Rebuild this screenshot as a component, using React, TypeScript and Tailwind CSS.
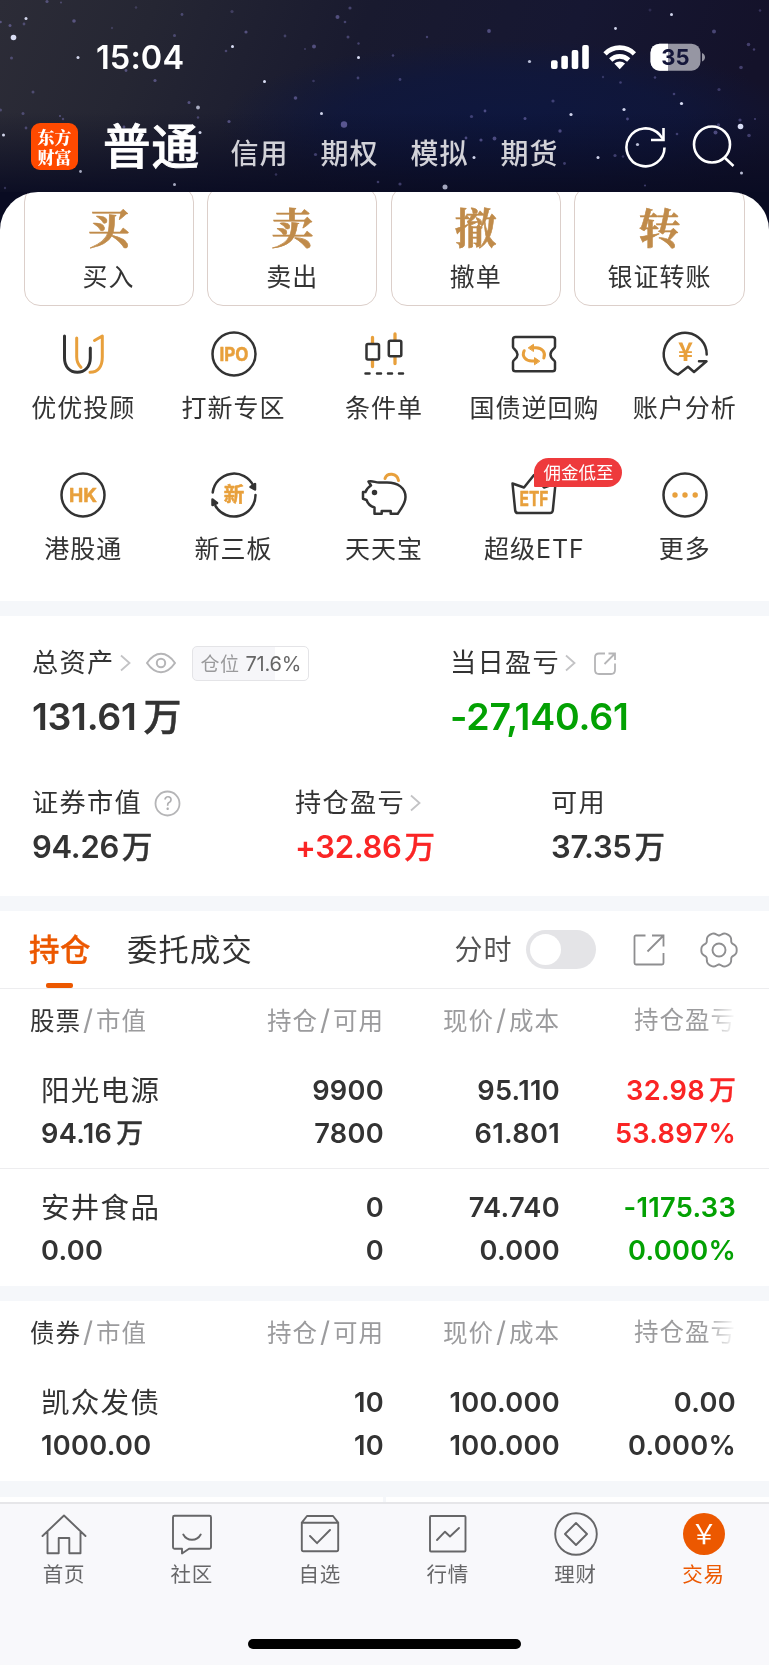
import type { ReactNode } from 'react'

const DARK = '#333333'
const GOLD = '#e8a03c'
const GRAY = '#666668'

// x, y, radius, opacity
const stars: [number, number, number, number][] = [
  [13.5, 37.5, 2.8, 0.95], [26, 18.5, 1.5, 0.9], [10, 25.5, 1.5, 0.5], [24, 24, 1.4, 0.4], [47, 1.5, 1.6, 0.45],
  [0.5, 22, 1.3, 0.5], [74, 21, 1.8, 0.5], [11.5, 58, 1.5, 0.4], [78, 57.5, 1.5, 0.9], [33, 92, 1.5, 0.4],
  [61, 2.5, 1, 0.4], [112, 28, 1.2, 0.25], [136, 7.5, 1.3, 0.25], [182, 14.5, 1.4, 0.4], [174.5, 35.5, 1.5, 0.4],
  [232.5, 46.5, 1.5, 0.95], [226, 51, 1.3, 0.4], [155, 80.5, 1.6, 0.5], [126, 70.5, 1.4, 0.5], [189, 102.5, 1.5, 0.5],
  [198, 107.5, 1.9, 0.7], [264.5, 81.5, 1.5, 0.95], [246, 32, 1.6, 0.5], [285, 36, 1.4, 0.35], [232, 11.5, 1.6, 0.3],
  [314, 46.5, 2, 0.5], [305, 49, 1.1, 0.3], [295.5, 98, 1.8, 0.5], [321.5, 113.5, 1.5, 0.9], [344, 124.5, 3.2, 0.6],
  [337.5, 17, 2, 0.5], [345, 22, 1.3, 0.4], [350, 8, 1.6, 0.4], [348, 37, 1.5, 0.4], [358.5, 57.5, 1.5, 0.95],
  [358.5, 43.5, 1.2, 0.4], [358, 78, 1.4, 0.4], [313.5, 81, 1.3, 0.3], [229, 121.5, 1.6, 0.5], [200, 132.5, 1.5, 0.9],
  [198, 117.5, 1.2, 0.4], [197, 153, 1.3, 0.7], [174.5, 184.5, 1.5, 0.7], [80.5, 171.5, 1.4, 0.7], [3.5, 135, 1.5, 0.9],
  [23, 113.5, 1.5, 0.4], [26, 128, 1.4, 0.4], [60, 116, 1, 0.5], [63, 119, 1.2, 0.4], [0.5, 110, 1.5, 0.4],
  [5, 188, 1.2, 0.3], [315.5, 154.5, 1.6, 0.4], [276, 174.5, 1.3, 0.3], [378, 182, 1.3, 0.4], [124, 127, 1.4, 0.5],
  [427, 37, 1.2, 0.4], [489, 31, 1.9, 0.5], [393, 55.5, 1.3, 0.4], [400, 79.5, 1.4, 0.4], [529.5, 61.5, 1.6, 0.8],
  [615.5, 28.5, 1.4, 0.9], [671.5, 14.5, 1.5, 0.9], [650, 10, 1.5, 0.2], [714, 31.5, 2, 0.45], [760, 10.5, 1.3, 0.3],
  [748.5, 44.5, 1.8, 0.4], [754, 49.5, 1.2, 0.4], [741, 67.5, 1.8, 0.4], [719, 89.5, 1.6, 0.35], [681.5, 103.5, 1.6, 0.95],
  [674, 94, 1.3, 0.4], [655, 77.5, 1.3, 0.4], [620.5, 82.5, 1.3, 0.4], [603, 77, 1.2, 0.3], [553, 101, 1.6, 0.4],
  [571, 114.5, 1.6, 0.9], [624, 109.5, 1.6, 0.9], [627.5, 119, 1.4, 0.5], [525, 118.5, 1.5, 0.5], [560, 131, 1.7, 0.5],
  [485, 111, 1.4, 0.5], [471.5, 116.5, 1.6, 0.4], [494.5, 138.5, 1.9, 0.5], [481, 140, 1.6, 0.5], [466, 138, 1.4, 0.5],
  [474, 157.5, 1.5, 0.9], [598, 157.5, 1.5, 0.9], [518.5, 147.5, 2, 0.6], [564.5, 163.5, 1.4, 0.4], [637.5, 144.5, 1.6, 0.8],
  [740.5, 126.5, 2.8, 0.95], [740, 120, 1.6, 0.4], [718.5, 125, 1.7, 0.4], [715.5, 132.5, 2, 0.5], [749, 135.5, 1.8, 0.4],
  [677, 134, 1.3, 0.4], [741.5, 173, 1.5, 0.8], [445, 187, 2.5, 0.7], [400, 184, 1.6, 0.4], [645, 185.5, 1.1, 0.4],
  [615, 155.5, 1.6, 0.4], [623, 156.5, 1.3, 0.3], [755, 119, 1.1, 0.4],
]

function StarrySky() {
  return (
    <svg className="absolute left-0 top-0" width="769" height="240" viewBox="0 0 769 240">
      <defs>
        <linearGradient id="sky" x1="0" y1="0" x2="1" y2="0.12">
          <stop offset="0" stopColor="#2c2c37" />
          <stop offset="0.2" stopColor="#252633" />
          <stop offset="0.48" stopColor="#191a2f" />
          <stop offset="0.75" stopColor="#161732" />
          <stop offset="1" stopColor="#14122a" />
        </linearGradient>
        <radialGradient id="blue">
          <stop offset="0" stopColor="#0d1740" stopOpacity="0.9" />
          <stop offset="0.6" stopColor="#0d1740" stopOpacity="0.65" />
          <stop offset="1" stopColor="#0d1740" stopOpacity="0" />
        </radialGradient>
        <linearGradient id="floor" x1="0" y1="0" x2="0" y2="1">
          <stop offset="0" stopColor="#090b22" stopOpacity="0" />
          <stop offset="1" stopColor="#090b22" stopOpacity="0.9" />
        </linearGradient>
        <filter id="soft" x="-100%" y="-100%" width="300%" height="300%">
          <feGaussianBlur stdDeviation="0.5" />
        </filter>
      </defs>
      <rect width="769" height="240" fill="url(#sky)" />
      <ellipse cx="510" cy="125" rx="290" ry="85" fill="url(#blue)" />
      <rect y="112" width="769" height="80" fill="url(#floor)" />
      <rect y="192" width="769" height="48" fill="#090b22" />
      <g filter="url(#soft)">
        {stars.map(([x, y, r, o], i) => (
          <circle key={i} cx={x} cy={y} r={r} opacity={o} fill={o > 0.65 ? '#e4e8ff' : '#8a82cc'} />
        ))}
      </g>
    </svg>
  )
}

function StatusBar() {
  return (
    <div className="flex h-[115px] items-start pl-24 pr-[63px] pt-[38px]">
      <span className="text-[32.5px] leading-[40px] font-semibold text-white tracking-[0.1px]">15:04</span>
      <svg className="ml-auto mt-[5px]" width="155" height="30" viewBox="0 0 155 30">
        <g fill="#fff">
          <rect x="0" y="17.3" width="6.6" height="8.7" rx="2" />
          <rect x="10.3" y="12.7" width="6.6" height="13.3" rx="2" />
          <rect x="20.7" y="7" width="6.6" height="19" rx="2" />
          <rect x="31.2" y="2" width="6.6" height="24" rx="2" />
        </g>
        <g fill="none" stroke="#fff" strokeWidth="4.6">
          <path d="M54 10.8 A20.5 20.5 0 0 1 83.4 10.8" />
          <path d="M59.7 17 A13 13 0 0 1 77.7 17" />
        </g>
        <path d="M63.3 20.6 A8.3 8.3 0 0 1 74.1 20.6 L68.7 26.2 Z" fill="#fff" />
        <clipPath id="battery">
          <rect x="99.5" y="0.7" width="50" height="27" rx="9" />
        </clipPath>
        <g clipPath="url(#battery)">
          <rect x="99" width="51" height="30" fill="#9696a3" />
          <rect x="99" width="18" height="30" fill="#fff" />
        </g>
        <path d="M151 10 q3 1.4 3 4.3 q0 2.9 -3 4.3 Z" fill="#9696a3" />
        <text x="124.5" y="22.4" textAnchor="middle" fontSize="22" fontWeight="700" fill="#14163a">35</text>
      </svg>
    </div>
  )
}

const accounts = ['信用', '期权', '模拟', '期货']

function TopTabs() {
  return (
    <div className="flex h-[77px] items-start pl-[31px]">
      <div className="mt-2 flex h-[47px] w-[47px] flex-col items-center justify-center gap-[2px] rounded-[9px] bg-[#ff4a00] font-['Noto_Serif_CJK_SC','Noto_Sans_CJK_SC',serif] text-[17px] leading-[18px] font-black text-white">
        <span>东方</span>
        <span>财富</span>
      </div>
      <span className="ml-[25px] mt-[2px] text-[47.5px] leading-[60px] font-medium tracking-[1px] text-white [-webkit-text-stroke:0.8px_white]">普通</span>
      <div className="ml-[30.5px] mt-[19px] flex gap-[31px] text-[28px] leading-[40px] font-medium tracking-[0.9px] text-[#d2d2d8]">
        {accounts.map((name) => (
          <span key={name} className="w-[59px] whitespace-nowrap">{name}</span>
        ))}
      </div>
      <svg className="ml-auto mr-[30px] mt-[8px]" width="116" height="48" viewBox="0 0 116 48" fill="none" stroke="#fff" strokeWidth="2.6">
        <path d="M41.5 24.5 A19 19 0 1 1 36.5 11.5 L40 16" />
        <path d="M40.5 5 V17 H28" />
        <circle cx="89" cy="21.5" r="18" />
        <path d="M101.5 34.5 L110.5 43" />
      </svg>
    </div>
  )
}

const actions = [
  { glyph: '买', label: '买入' },
  { glyph: '卖', label: '卖出' },
  { glyph: '撤', label: '撤单' },
  { glyph: '转', label: '银证转账' },
]

function ActionCards() {
  return (
    <div className="h-[115px] overflow-hidden rounded-t-[38px] pl-[23.5px] pr-[24.5px]">
      <div className="-mt-[6px] grid grid-cols-4 gap-[13.5px]">
        {actions.map((a) => (
          <div key={a.label} className="flex h-[120px] flex-col items-center rounded-[16px] border border-[#dccfca] pt-[16px]">
            <span className="font-['Noto_Serif_CJK_SC','Noto_Serif_SC','Noto_Sans_CJK_SC',serif] text-[42px] leading-[46px] font-bold text-[#c08b4a] [-webkit-text-stroke:0.6px_#c08b4a]">{a.glyph}</span>
            <span className="mt-[10px] text-[25px] leading-[36px] tracking-[1px]">{a.label}</span>
          </div>
        ))}
      </div>
    </div>
  )
}

function Icon({ children }: { children: ReactNode }) {
  return (
    <svg width="50" height="50" viewBox="-25 -25 50 50" fill="none" stroke={DARK} strokeWidth="2.5" strokeLinejoin="round" strokeLinecap="round">
      {children}
    </svg>
  )
}

function IconText({ children, size, y, length }: { children: string; size: number; y: number; length?: number }) {
  return (
    <text x="0" y={y} textAnchor="middle" fontSize={size} fontWeight="700" fill={GOLD} stroke={GOLD} strokeWidth="0.5" textLength={length} lengthAdjust="spacingAndGlyphs">
      {children}
    </text>
  )
}

const services: { label: string; badge?: string; icon: ReactNode }[] = [
  {
    label: '优优投顾',
    icon: (
      <g strokeWidth="3">
        <path d="M-18.5 -18 V4 C-18.5 13 -13 18.3 -5.7 18.3 S7.3 13 7.3 4 V-6" />
        <path d="M-6.3 -16 V3 C-6.3 7.5 -5 10.5 -2 13.3" stroke={GOLD} />
        <path d="M11.5 -13.5 L19.3 -18 V3 C19.3 12.5 15 18.3 7 18.3" stroke={GOLD} />
      </g>
    ),
  },
  {
    label: '打新专区',
    icon: (
      <>
        <circle r="21.5" />
        <IconText size={18.5} y={6.8} length={29}>IPO</IconText>
      </>
    ),
  },
  {
    label: '条件单',
    icon: (
      <>
        <path d="M-11.5 -16.5 V-11 M-11.5 6 V12.5 M11 -20 V-14 M11 3 V9.5" stroke={GOLD} strokeWidth="3.3" />
        <rect x="-17.5" y="-10" width="12.5" height="15.5" rx="1.5" />
        <rect x="4.8" y="-13.3" width="12.5" height="15.5" rx="1.5" />
        <path d="M-18.5 19.5 h4 M-7 19.5 h4 M4 19.5 h4 M15 19.5 h4" />
      </>
    ),
  },
  {
    label: '国债逆回购',
    icon: (
      <>
        <path d="M-18.5 -17 H18.5 Q21 -17 21 -14.5 V-7 C21 -5 16.5 -4.5 16.5 0.5 S21 5.5 21 8 V15 Q21 17.3 18.5 17.3 H-18.5 Q-21 17.3 -21 15 V8 C-21 5.5 -16.5 5 -16.5 0.5 S-21 -5 -21 -7 V-14.5 Q-21 -17 -18.5 -17 Z" />
        <g stroke={GOLD} strokeWidth="3">
          <path d="M-2 -6.3 H2 C8.5 -6.3 12 -1 9.8 4" />
          <path d="M-9.8 -3.3 C-12.5 2 -8.5 7 -2 7 H1" />
        </g>
        <path d="M-5.5 -6.3 L-0.5 -9.7 V-2.9 Z M5.5 7 L0.5 3.6 V10.4 Z" fill={GOLD} stroke={GOLD} strokeWidth="1" />
      </>
    ),
  },
  {
    label: '账户分析',
    icon: (
      <>
        <path d="M21.7 0.5 A21.5 21.5 0 1 0 -7 20.5 L3 12.7 L9 18 L21.5 7.3 H14" />
        <text x="0.5" y="7" textAnchor="middle" className="font-['Noto_Sans_CJK_SC']" fontSize="25.5" fontWeight="700" fill={GOLD} stroke="none">¥</text>
      </>
    ),
  },
  {
    label: '港股通',
    icon: (
      <>
        <circle r="21.5" />
        <IconText size={18.5} y={6.8} length={28}>HK</IconText>
      </>
    ),
  },
  {
    label: '新三板',
    icon: (
      <>
        <path d="M-21.3 -2.5 A21.5 21.5 0 0 1 19.5 -9" />
        <path d="M21.5 0 A21.5 21.5 0 0 1 -18.5 11" />
        <path d="M21 -11 V-5.5 L16.5 -8 Z M-21.5 4.5 L-17 8 L-21.5 10 Z" fill={DARK} />
        <IconText size={20.5} y={7.3}>新</IconText>
      </>
    ),
  },
  {
    label: '天天宝',
    icon: (
      <>
        <path d="M1 -16.5 C3 -22.5 13 -22.5 14.5 -14.5" stroke={GOLD} strokeWidth="3" />
        <path d="M-15.5 -13.5 C-11 -14.5 -9 -12.5 -5 -12.5 H3 C14 -12.5 21.5 -7 21.5 2 C21.5 9 17 13.5 13.7 18.8 H6.7 V16 H-2.3 V18.8 H-9.5 V12.5 C-13 11.5 -16 9.5 -17.5 5 L-21 3.8 V-3 H-18.5 C-17.5 -6 -15.5 -8 -13 -9.5 Z" />
        <circle cx="-9.5" cy="-2.5" r="1.5" fill={DARK} />
      </>
    ),
  },
  {
    label: '超级ETF',
    badge: '佣金低至',
    icon: (
      <>
        <path d="M-21.5 -11.5 L-10 -7.5 L0 -20 L10 -7.5 L21.5 -11.5 L18.8 15.5 Q18.5 18 16 18 H-16 Q-18.5 18 -18.8 15.5 Z" />
        <IconText size={20} y={11} length={29}>ETF</IconText>
      </>
    ),
  },
  {
    label: '更多',
    icon: (
      <>
        <circle r="21.5" />
        <g fill={GOLD} stroke="none">
          <circle cx="-10" r="2.7" />
          <circle r="2.7" />
          <circle cx="10.2" r="2.7" />
        </g>
      </>
    ),
  },
]

function ServiceGrid() {
  return (
    <div className="grid h-[294px] auto-rows-[141px] grid-cols-5 pl-[8px] pr-[9px] pt-[22px]">
      {services.map((s) => (
        <div key={s.label} className="relative flex flex-col items-center">
          <Icon>{s.icon}</Icon>
          <span className="mt-[10.5px] text-[25px] leading-[36px] tracking-[1px] whitespace-nowrap">{s.label}</span>
          {s.badge && (
            <span className="absolute left-1/2 -top-[12px] h-[29px] w-[88px] rounded-[14.5px] rounded-bl-[1px] bg-[#ee3a3c] text-center text-[17.5px] leading-[29px] text-white">
              {s.badge}
            </span>
          )}
        </div>
      ))}
    </div>
  )
}

function Chevron() {
  return (
    <svg width="11" height="18" viewBox="0 0 11 18" fill="none" stroke="#c3c3c5" strokeWidth="1.8">
      <path d="M1 1.5 L9.5 9 L1 16.5" />
    </svg>
  )
}

function Band() {
  return <div className="h-[15px] bg-[#f5f7fa]" />
}

function Assets() {
  return (
    <div className="h-[280px] text-[26.2px] tracking-[1.3px]">
      <div className="flex">
        <div className="w-[450px] pl-[32px] pt-[27px]">
          <div className="flex h-[40px] items-center">
            <span>总资产</span>
            <span className="ml-[6px]"><Chevron /></span>
            <svg className="ml-[15px]" width="30" height="22" viewBox="0 0 30 22" fill="none" stroke="#b5b5b7" strokeWidth="2">
              <path d="M1 11 C5.5 4.5 10 1.8 15 1.8 S24.5 4.5 29 11 C24.5 17.5 20 20.2 15 20.2 S5.5 17.5 1 11 Z" />
              <circle cx="15" cy="11" r="4.2" />
            </svg>
            <span className="ml-[16px] mt-[1px] flex h-[35px] w-[117px] items-center rounded-[5px] border border-[#e4e4e7] bg-linear-to-r from-[#f6f6f9] from-[71.6%] to-white to-[71.6%] pl-[7px] text-[19px] leading-[33px] tracking-[0.5px] text-[#666]">
              <span className="mt-[1px] text-[#9a9a9c]">仓位</span>
              <span className="mt-[1px] ml-[6px] text-[20px] tracking-[-0.2px]">71.6%</span>
            </span>
          </div>
          <div className="mt-[7px] text-[37.5px] leading-[52px] font-semibold tracking-[-0.3px]">
            131.61<span className="ml-[7px] text-[38px] font-medium [-webkit-text-stroke:0.5px]">万</span>
          </div>
        </div>
        <div className="pt-[27px]">
          <div className="flex h-[40px] items-center">
            <span>当日盈亏</span>
            <span className="ml-[5px]"><Chevron /></span>
            <svg className="ml-[18px]" width="22" height="23" viewBox="0 0 22 23" fill="none" stroke="#b5b5b7" strokeWidth="1.8">
              <path d="M11 1.5 H5 Q1 1.5 1 5.5 V18 Q1 22 5 22 H17 Q21 22 21 18 V11.5" />
              <path d="M14.5 1.5 H21 V8 M21 1.5 L10.5 12" />
            </svg>
          </div>
          <div className="mt-[8px] text-[37.5px] leading-[52px] font-semibold tracking-[-0.2px] text-[#03a103]">-27,140.61</div>
        </div>
      </div>

      <div className="mt-[40px] flex">
        <div className="w-[295px] pl-[32px]">
          <div className="flex h-[40px] items-center">
            <span>证券市值</span>
            <svg className="ml-[12px]" width="27" height="27" viewBox="0 0 27 27">
              <circle cx="13.5" cy="13.5" r="12" fill="none" stroke="#b5b5b7" strokeWidth="1.8" />
              <text x="14" y="20" textAnchor="middle" fontSize="18" letterSpacing="0" fill="#aeaeb0">?</text>
            </svg>
          </div>
          <MidValue value="94.26" />
        </div>
        <div className="w-[256px]">
          <div className="flex h-[40px] items-center">
            <span>持仓盈亏</span>
            <span className="ml-[5px]"><Chevron /></span>
          </div>
          <div className="text-[#fa2525]"><MidValue value="+32.86" /></div>
        </div>
        <div>
          <div className="flex h-[40px] items-center">可用</div>
          <MidValue value="37.35" />
        </div>
      </div>
    </div>
  )
}

function MidValue({ value }: { value: string }) {
  return (
    <div className="mt-[2.5px] text-[31px] leading-[42px] font-semibold tracking-[-0.3px]">
      {value}<span className="ml-[3px] text-[30.5px] font-medium [-webkit-text-stroke:0.4px]">万</span>
    </div>
  )
}

// six wide teeth with narrow dips between them
const gearPath =
  Array.from({ length: 90 }, (_, i) => {
    const t = (i / 90) * Math.PI * 2
    const dip = (1 - Math.cos(6 * t)) / 2
    const r = 17.7 - 3.2 * dip * dip
    return `${i ? 'L' : 'M'}${(r * Math.cos(t)).toFixed(2)} ${(r * Math.sin(t)).toFixed(2)}`
  }).join(' ') + ' Z'

function HoldingTabs() {
  return (
    <div className="flex h-[78px] border-b border-[#ededef]">
      <div className="ml-[29px] flex w-[61px] flex-col items-center">
        <span className="mt-[17px] pl-[1px] text-[30.5px] leading-[44px] font-medium tracking-[0.4px] whitespace-nowrap text-[#ec5800] [-webkit-text-stroke:0.3px]">持仓</span>
        <span className="mt-[11px] h-[5px] w-[27px] shrink-0 rounded-[2px] bg-[#ec5800]" />
      </div>
      <span className="ml-[37px] mt-[17px] text-[30.2px] leading-[44px] tracking-[1.3px]">委托成交</span>
      <div className="ml-auto flex h-[77px] items-center">
        <span className="text-[28px] tracking-[1px] text-[#555]">分时</span>
        <span className="ml-[13.5px] flex h-[39px] w-[70px] items-center rounded-full bg-[#e4e4e7] pl-[4px]">
          <span className="h-[31px] w-[31px] rounded-full bg-white" />
        </span>
        <svg className="ml-[37px]" width="32" height="32" viewBox="-1 -1 32 32" fill="none" stroke="#8e8e90" strokeWidth="1.8">
          <path d="M11.5 0.5 H2 Q0.5 0.5 0.5 2 V28 Q0.5 29.5 2 29.5 H28 Q29.5 29.5 29.5 28 V18" />
          <path d="M18 0.5 H29.5 V11.5 M29.5 0.5 L13.5 16.5" />
        </svg>
        <svg className="ml-[35px] mr-[31px]" width="38" height="38" viewBox="-19 -19 38 38" fill="none" stroke="#8e8e90" strokeWidth="1.9">
          <path d={gearPath} />
          <circle r="6.5" />
        </svg>
      </div>
    </div>
  )
}

interface Holding {
  name: string
  rows: [string[], string[]]
  color: string
}

const stocks: Holding[] = [
  {
    name: '阳光电源',
    rows: [['9900', '95.110', '32.98万'], ['94.16万', '7800', '61.801', '53.897%']],
    color: 'text-[#fa2525]',
  },
  {
    name: '安井食品',
    rows: [['0', '74.740', '-1175.33'], ['0.00', '0', '0.000', '0.000%']],
    color: 'text-[#03a103]',
  },
]

const bonds: Holding[] = [
  {
    name: '凯众发债',
    rows: [['10', '100.000', '0.00'], ['1000.00', '10', '100.000', '0.000%']],
    color: 'text-[#333333]',
  },
]

const columns = 'grid grid-cols-[204px_180px_176px_176px]'

function TableHead({ kind }: { kind: string }) {
  return (
    <div className={`${columns} h-[66px] pt-[13px] text-[24.5px] leading-[36px] tracking-[1px] text-[#9b9b9d]`}>
      <span className="pl-[30px]"><span className="text-[#333333]">{kind}</span><Slash />市值</span>
      <span className="text-right">持仓<Slash />可用</span>
      <span className="text-right">现价<Slash />成本</span>
      <span className="bg-linear-to-r from-[#9b9b9d] from-[82%] to-white to-[100%] bg-clip-text text-right text-transparent">持仓盈亏</span>
    </div>
  )
}

function Slash() {
  return <span className="mx-[2px] text-[28px]">/</span>
}

// Chinese units are set a step smaller than the digits before them
function Figure({ text }: { text: string }) {
  if (!text.endsWith('万')) return <>{text}</>
  return <>{text.slice(0, -1)}<span className="ml-[4px] text-[27px] font-medium tracking-normal [-webkit-text-stroke:0.3px]">万</span></>
}

function HoldingRow({ holding }: { holding: Holding }) {
  const [first, second] = holding.rows
  return (
    <div className="pt-[15px] text-[27.2px] leading-[42.5px] font-semibold tracking-[0.3px]">
      <div className={columns}>
        <span className="pl-[41px] text-[28.5px] font-normal tracking-[1.3px]">{holding.name}</span>
        {first.map((v, i) => (
          <span key={i} className={`text-right ${i === 2 ? holding.color : ''}`}><Figure text={v} /></span>
        ))}
      </div>
      <div className={columns}>
        {second.map((v, i) => (
          <span key={i} className={i === 0 ? 'pl-[41px]' : `text-right ${i === 3 ? holding.color : ''}`}><Figure text={v} /></span>
        ))}
      </div>
    </div>
  )
}

const navItems: { label: string; active?: boolean; icon: ReactNode }[] = [
  {
    label: '首页',
    icon: <path d="M-21.5 2 L0 -18.5 L21.5 2 M-16.5 -2 V19.3 H-5.3 V4 H5.3 V19.3 H16.5 V-2" />,
  },
  {
    label: '社区',
    icon: <path d="M-17.5 -18.3 H17.5 Q19 -18.3 19 -16.8 V13.2 Q19 14.7 17.5 14.7 H-3 L-10 19.5 V14.7 H-17.5 Q-19 14.7 -19 13.2 V-16.8 Q-19 -18.3 -17.5 -18.3 Z M-8.7 0.5 C-5 7.5 5 7.5 8.7 0.5" />,
  },
  {
    label: '自选',
    icon: <path d="M-18.2 -11.3 L-13 -18 H13 L18.2 -11.3 M-18.2 -11.3 H18.2 V15.5 Q18.2 17.3 16.5 17.3 H-16.5 Q-18.2 17.3 -18.2 15.5 Z M-10 2 L-3 9.2 L10 -4" />,
  },
  {
    label: '行情',
    icon: (
      <>
        <rect x="-18" y="-18" width="35.5" height="35.5" rx="1" />
        <path d="M-11 6 L-3 -2.3 L2 2.5 L11 -6" />
      </>
    ),
  },
  {
    label: '理财',
    icon: (
      <>
        <circle r="20.8" />
        <path d="M0 -11 L11 0 L0 11 L-11 0 Z" />
      </>
    ),
  },
  {
    label: '交易',
    active: true,
    icon: (
      <>
        <circle r="21" fill="#ec5800" stroke="none" />
        <text x="0" y="10" textAnchor="middle" className="font-['Noto_Sans_CJK_SC']" fontSize="27" fontWeight="400" fill="#fff" stroke="none">￥</text>
      </>
    ),
  },
]

function BottomNav() {
  return (
    <div className="h-[163px] border-t-2 border-[#e6e6e9] bg-[#f8f8fb]">
      <div className="grid grid-cols-6 pr-[1.5px] pt-[6px]">
        {navItems.map((n) => (
          <div key={n.label} className={`flex flex-col items-center ${n.active ? 'text-[#ec5800]' : 'text-[#666668]'}`}>
            <svg width="48" height="48" viewBox="-24 -24 48 48" fill="none" stroke={GRAY} strokeWidth="1.9" strokeLinejoin="round" strokeLinecap="round">
              {n.icon}
            </svg>
            <span className="mt-[2px] text-[20.5px] leading-[30px] tracking-[0.8px]">{n.label}</span>
          </div>
        ))}
      </div>
      <div className="mx-auto mt-[49px] h-[10px] w-[273px] rounded-full bg-black" />
    </div>
  )
}

export default function App() {
  return (
    <div className="relative h-[1665px] w-[769px] overflow-hidden bg-white font-['Inter','Noto_Sans_CJK_SC',sans-serif] text-[#333333]">
      <StarrySky />
      <div className="relative">
        <StatusBar />
        <TopTabs />
        <div className="rounded-t-[38px] bg-white">
          <ActionCards />
          <ServiceGrid />
          <Band />
          <Assets />
          <Band />
          <HoldingTabs />
          <TableHead kind="股票" />
          <div className="h-[114px] border-b border-[#ededef]">
            <HoldingRow holding={stocks[0]} />
          </div>
          <div className="h-[117px] pt-[3px]">
            <HoldingRow holding={stocks[1]} />
          </div>
          <Band />
          <div className="h-[180px]">
            <TableHead kind="债券" />
            <HoldingRow holding={bonds[0]} />
          </div>
          <div className="h-[16px] bg-[#f5f7fa]" />
          <div className="flex h-[5px] gap-[3px] bg-[#f5f7fa]">
            <div className="flex-1 bg-white" />
            <div className="flex-1 bg-white" />
          </div>
          <BottomNav />
        </div>
      </div>
    </div>
  )
}
